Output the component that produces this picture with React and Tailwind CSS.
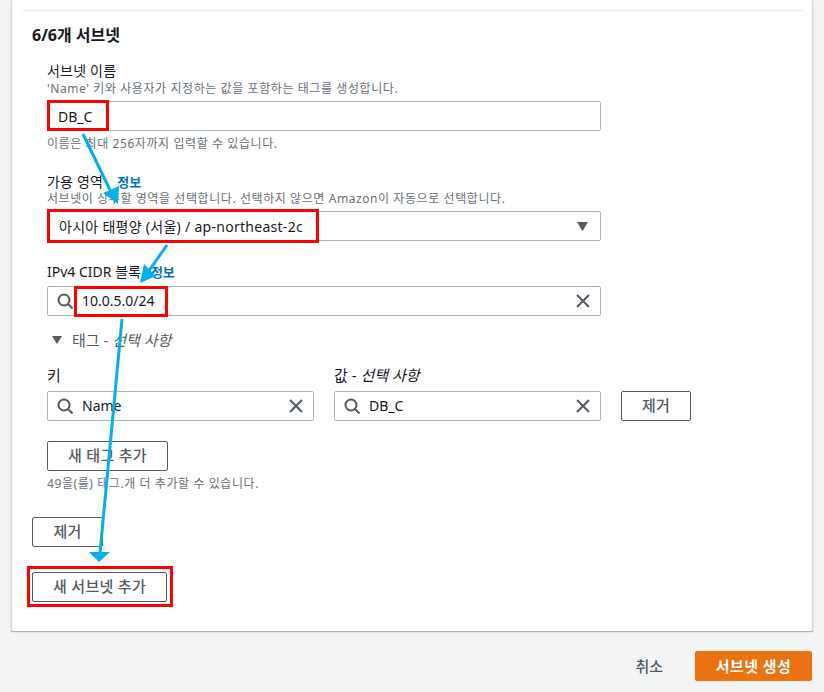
import React from "react";

const font = { fontFamily: '"Noto Sans", "Noto Sans CJK KR", sans-serif' };

function SearchIcon() {
  return (
    <svg width="16" height="16" viewBox="0 0 16 16" fill="none" stroke="#545b64" strokeWidth="2" className="shrink-0">
      <circle cx="7" cy="7" r="5.5" />
      <path d="M11 11l4.5 4.5" />
    </svg>
  );
}

function XIcon() {
  return (
    <svg width="14" height="14" viewBox="0 0 14 14" fill="none" stroke="#545b64" strokeWidth="2" className="shrink-0">
      <path d="M1 1l12 12M13 1L1 13" />
    </svg>
  );
}

function SearchInput({ value, className }) {
  return (
    <div className={"h-[30px] flex items-center pl-[9px] pr-[10px] border border-[#aab7b8] rounded-[2px] bg-white " + className}>
      <SearchIcon />
      <span className="ml-[9px] flex-1 text-[14px] leading-[20px] text-[#16191f]">{value}</span>
      <XIcon />
    </div>
  );
}

function Button({ children, className }) {
  return (
    <div className={"h-[30px] pb-[2px] flex items-center justify-center border border-[#545b64] rounded-[2px] bg-white text-[15px] font-medium tracking-[0.3px] text-[#545b64] " + className}>
      {children}
    </div>
  );
}

function Info({ className }) {
  return <span className={"text-[13px] font-bold text-[#0073bb] translate-y-[1px] " + className}>정보</span>;
}

function RedBox({ className }) {
  return <div className={"absolute border-[3px] border-[#ff0000] " + className} />;
}

function Annotations() {
  return (
    <svg className="absolute left-0 top-0 pointer-events-none" width="824" height="692" fill="#00b0f0" stroke="none">
      <path d="M83 134L110 190" stroke="#00b0f0" strokeWidth="3" />
      <polygon points="118,204 103,193 119,186" />
      <path d="M167 245L148 272" stroke="#00b0f0" strokeWidth="3" />
      <polygon points="140,283 144,264 156,276" />
      <path d="M122 319L100 553" stroke="#00b0f0" strokeWidth="3" />
      <polygon points="99,562 89,552 110,552" />
    </svg>
  );
}

const desc = "text-[12px] leading-[16px] tracking-[0.58px] text-[#687078]";

export default function App() {
  return (
    <div style={font} className="relative w-[824px] h-[692px] overflow-hidden bg-[#f2f3f3] text-[#16191f]">
      <div className="ml-[11px] w-[802px] h-[631px] bg-white border-l border-r border-[#d5dbdb] shadow-[0_1px_1px_0_rgba(0,28,36,0.3)]">
        <div className="ml-[10px] mr-[9px] h-[11px] border-b border-[#eaeded]" />
        <div className="pl-[20px] pt-[14px]">
          <h2 className="text-[16px] leading-[20px] font-bold">6/6개 서브넷</h2>

          <div className="pl-[15px] pt-[16px] w-[569px]">
            <div className="text-[14px] leading-[20px] tracking-[0.2px]">서브넷 이름</div>
            <div className={desc}>'Name' 키와 사용자가 지정하는 값을 포함하는 태그를 생성합니다.</div>
            <div className="mt-[4px] h-[30px] flex items-center pl-[10px] border border-[#aab7b8] rounded-[2px] text-[14px]">DB_C</div>
            <div className={"mt-[5px] " + desc}>이름은 최대 256자까지 입력할 수 있습니다.</div>

            <div className="mt-[20px] flex items-center h-[19px] text-[14px] tracking-[0.2px]">가용 영역 <Info className="ml-[14px]" /></div>
            <div className={desc}>서브넷이 상주할 영역을 선택합니다. 선택하지 않으면 Amazon이 자동으로 선택합니다.</div>
            <div className="mt-[4px] h-[30px] flex items-center justify-between pl-[11px] pr-[12px] border border-[#aab7b8] rounded-[2px] text-[14px]">
              <span className="tracking-[0.28px]">아시아 태평양 (서울) / ap-northeast-2c</span>
              <svg width="11" height="9" viewBox="0 0 11 9" fill="#545b64"><polygon points="0,0 11,0 5.5,9" /></svg>
            </div>

            <div className="mt-[21px] flex items-center h-[19px] text-[14px]">IPv4 CIDR 블록 <Info className="ml-[10px]" /></div>
            <SearchInput value="10.0.5.0/24" className="mt-[5px]" />

            <div className="mt-[14px] ml-[5px] flex items-center h-[20px] text-[15px] text-[#545b64]">
              <svg width="10" height="8" viewBox="0 0 10 8" fill="#545b64" className="mr-[10px]"><polygon points="0,0 10,0 5,8" /></svg>
              <span>태그 - <i>선택 사항</i></span>
            </div>

            <div className="mt-[15px] grid grid-cols-[267px_267px_70px] gap-x-[20px] w-[644px]">
              <div className="h-[20px] text-[15px] leading-[20px]">키</div>
              <div className="h-[20px] text-[15px] leading-[20px]">값 - <i>선택 사항</i></div>
              <div />
              <SearchInput value="Name" className="mt-[6px]" />
              <SearchInput value="DB_C" className="mt-[6px]" />
              <Button className="mt-[6px]">제거</Button>
            </div>

            <Button className="mt-[20px] w-[121px]">새 태그 추가</Button>
            <div className={"mt-[5px] " + desc}>49을(를) 태그.개 더 추가할 수 있습니다.</div>
          </div>

          <Button className="mt-[25px] w-[71px]">제거</Button>
          <Button className="mt-[25px] w-[135px]">새 서브넷 추가</Button>
        </div>
      </div>

      <div className="mt-[20px] mr-[12px] flex items-center justify-end">
        <span className="mr-[32px] text-[15px] font-medium text-[#545b64]">취소</span>
        <div className="w-[117px] h-[30px] flex items-center justify-center rounded-[2px] bg-[#ec7211] text-white text-[15px] tracking-[0.4px] font-bold">서브넷 생성</div>
      </div>

      <RedBox className="left-[47px] top-[100px] w-[62px] h-[31px]" />
      <RedBox className="left-[47px] top-[209px] w-[272px] h-[34px]" />
      <RedBox className="left-[74px] top-[286px] w-[94px] h-[31px]" />
      <RedBox className="left-[27px] top-[566px] w-[146px] h-[41px]" />
      <Annotations />
    </div>
  );
}
